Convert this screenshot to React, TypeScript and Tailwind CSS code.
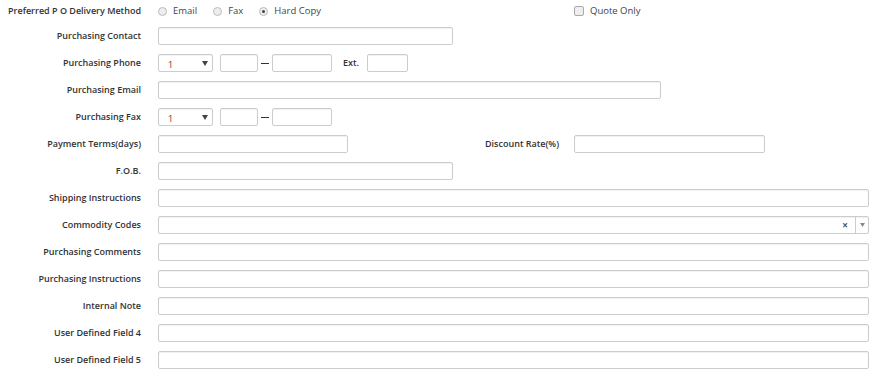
import React from 'react';

const label = 'text-right font-semibold text-[9px] text-[#333] leading-[18px] whitespace-nowrap';
const input = 'h-[18px] border border-[#ccc] rounded-[2px] bg-white shadow-[inset_0_1px_1px_rgba(0,0,0,0.06)]';

function CountrySelect() {
  return (
    <div className={`${input} w-[55px] flex items-center justify-between pl-[9px] pr-[4px]`}>
      <span className="text-[9px] text-[#8e2a2a] leading-none mt-[2px]">1</span>
      <svg width="6" height="5" viewBox="0 0 6 5">
        <path d="M0 0h6L3 5z" fill="#444" />
      </svg>
    </div>
  );
}

function Radio({ text, checked }: { text: string; checked?: boolean }) {
  return (
    <div className="flex items-center gap-[6px]">
      <span className="w-[9px] h-[9px] rounded-full border border-[#bbb] bg-[#eee] flex items-center justify-center">
        {checked && <span className="w-[3px] h-[3px] rounded-full bg-[#444]" />}
      </span>
      <span className="text-[9.5px] text-[#444]">{text}</span>
    </div>
  );
}

function Row({ name, className = '', children }: { name: string; className?: string; children: React.ReactNode }) {
  return (
    <div className={`flex items-center gap-x-[17px] h-[18px] ${className}`}>
      <div className={`${label} w-[141px] shrink-0`}>{name}</div>
      <div className="flex-1 flex items-center">{children}</div>
    </div>
  );
}

export default function App() {
  const rest = ['Purchasing Comments', 'Purchasing Instructions', 'Internal Note', 'User Defined Field 4', 'User Defined Field 5'];
  return (
    <div className="w-[876px] h-[376px] bg-white pr-[7px] pt-[2px] flex flex-col gap-[9px]" style={{ fontFamily: '"Open Sans", sans-serif' }}>
      <Row name="Preferred P O Delivery Method" className="mb-[-2px]">
        <div className="flex items-center w-[416px] gap-[16px]">
          <Radio text="Email" />
          <Radio text="Fax" />
          <Radio text="Hard Copy" checked />
        </div>
        <div className="flex items-center gap-[6px]">
          <span className="w-[10px] h-[10px] rounded-[2px] border border-[#aaa] bg-[#eee]" />
          <span className="text-[9.5px] text-[#444]">Quote Only</span>
        </div>
      </Row>

      <Row name="Purchasing Contact">
        <div className={`${input} w-[295px]`} />
      </Row>

      <Row name="Purchasing Phone">
        <CountrySelect />
        <div className={`${input} w-[38px] ml-[7px]`} />
        <span className="w-[8px] h-px bg-[#333] mx-[3px]" />
        <div className={`${input} w-[60px]`} />
        <span className={`${label} ml-[11px]`}>Ext.</span>
        <div className={`${input} w-[41px] ml-[8px]`} />
      </Row>

      <Row name="Purchasing Email">
        <div className={`${input} w-[503px]`} />
      </Row>

      <Row name="Purchasing Fax">
        <CountrySelect />
        <div className={`${input} w-[38px] ml-[7px]`} />
        <span className="w-[8px] h-px bg-[#333] mx-[3px]" />
        <div className={`${input} w-[60px]`} />
      </Row>

      <Row name="Payment Terms(days)">
        <div className={`${input} w-[190px]`} />
        <div className={`${label} w-[211px]`}>Discount Rate(%)</div>
        <div className={`${input} w-[191px] ml-[15px]`} />
      </Row>

      <Row name="F.O.B.">
        <div className={`${input} w-[295px]`} />
      </Row>

      <Row name="Shipping Instructions">
        <div className={`${input} flex-1`} />
      </Row>

      <Row name="Commodity Codes">
        <div className={`${input} flex-1 flex items-center justify-end`}>
          <span className="text-[10px] text-[#555] font-bold leading-none mr-[7px]">×</span>
          <div className="h-full w-[13px] border-l border-[#ccc] flex items-center justify-center">
            <svg width="5" height="4" viewBox="0 0 5 4">
              <path d="M0 0h5L2.5 4z" fill="#888" />
            </svg>
          </div>
        </div>
      </Row>

      {rest.map((n) => (
        <Row key={n} name={n}>
          <div className={`${input} flex-1`} />
        </Row>
      ))}
    </div>
  );
}
